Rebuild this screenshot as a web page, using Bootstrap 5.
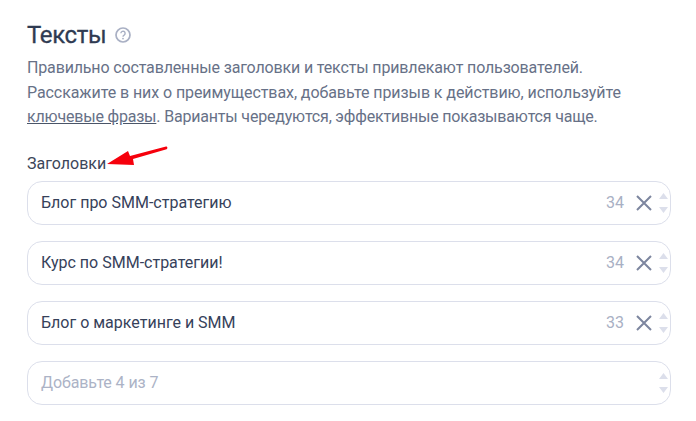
<!DOCTYPE html>
<html lang="ru">

<head>
  <meta charset="UTF-8" />
  <meta name="viewport" content="width=device-width, initial-scale=1" />
  <title>Тексты</title>
  <link href="https://cdn.jsdelivr.net/npm/bootstrap@5.3.0/dist/css/bootstrap.min.css" rel="stylesheet">
  <style>
    body {
      font-family: Roboto, "Liberation Sans", sans-serif;
      background-color: #fff;
      color: #2f3b52;
      overflow: hidden;
    }

    .page-wrap {
      position: relative;
      width: 696px;
      height: 421px;
      padding: 18px 25px 0 27px;
    }

    .page-title {
      font-size: 24px;
      line-height: 34px;
      font-weight: 400;
      -webkit-text-stroke: 0.3px #2f3b52;
      letter-spacing: -0.35px;
      color: #2f3b52;
      margin: 0;
    }

    .help-icon {
      width: 18px;
      height: 18px;
    }

    .intro-text {
      font-size: 16px;
      line-height: 24.5px;
      letter-spacing: -0.15px;
      color: #677187;
      margin: 4px 0 0;
      white-space: nowrap;
    }

    .intro-wide {
      letter-spacing: -0.08px;
    }

    .intro-tight {
      letter-spacing: -0.19px;
    }

    .intro-text a {
      color: #677187;
      text-decoration-color: #4a5568;
    }

    .field-label {
      font-size: 16px;
      line-height: 24px;
      color: #3c4659;
      margin: 22px 0 5px;
    }

    .text-field {
      height: 44px;
      border: 1px solid #dcdfeb;
      border-radius: 15px;
      padding: 0 2px 0 13px;
      font-size: 16px;
      color: #36415a;
    }

    .field-empty {
      color: #acb3c6;
      letter-spacing: -0.1px;
    }

    .field-count {
      color: #a9b0c4;
      margin-right: 12px;
    }

    .field-clear {
      width: 16px;
      height: 16px;
      margin-right: 7px;
    }

    .field-spin {
      width: 9px;
    }

    .arrow-mark {
      position: absolute;
      left: 99px;
      top: 140px;
      width: 75px;
      height: 30px;
    }
  </style>
</head>

<body>
  <div class="page-wrap">
    <div class="d-flex align-items-center gap-2">
      <h1 class="page-title">Тексты</h1>
      <svg class="help-icon" viewBox="0 0 18 18" fill="none">
        <circle cx="9" cy="9" r="7" stroke="#a9b0c4" stroke-width="1.7" />
        <path d="M6.900 7.300a2.100 2.100 0 1 1 3.200 1.800c-.7.400-1.100.8-1.100 1.600" stroke="#a9b0c4" stroke-width="1.400" />
        <circle cx="9" cy="12.600" r=".9" fill="#a9b0c4" />
      </svg>
    </div>
    <p class="intro-text">Правильно составленные заголовки и тексты привлекают пользователей.<br>
      <span class="intro-wide">Расскажите в них о преимуществах, добавьте призыв к действию, используйте</span><br>
      <span class="intro-tight"><a href="#">ключевые фразы</a>. Варианты чередуются, эффективные показываются чаще.</span></p>

    <div class="field-label">Заголовки</div>

    <div class="d-flex flex-column gap-3">
      <div class="text-field d-flex align-items-center">
        <span class="flex-grow-1">Блог про SMM-стратегию</span>
        <span class="field-count">34</span>
        <svg class="field-clear" viewBox="0 0 16 16"><path d="M1 1l14 14M15 1L1 15" stroke="#7d869f" stroke-width="2" /></svg>
        <svg class="field-spin" viewBox="0 0 9 24" height="24"><path d="M4.500 2L9 8H0zM4.500 22L9 16H0z" fill="#dcdfeb" /></svg>
      </div>
      <div class="text-field d-flex align-items-center">
        <span class="flex-grow-1">Курс по SMM-стратегии!</span>
        <span class="field-count">34</span>
        <svg class="field-clear" viewBox="0 0 16 16"><path d="M1 1l14 14M15 1L1 15" stroke="#7d869f" stroke-width="2" /></svg>
        <svg class="field-spin" viewBox="0 0 9 24" height="24"><path d="M4.500 2L9 8H0zM4.500 22L9 16H0z" fill="#dcdfeb" /></svg>
      </div>
      <div class="text-field d-flex align-items-center">
        <span class="flex-grow-1">Блог о маркетинге и SMM</span>
        <span class="field-count">33</span>
        <svg class="field-clear" viewBox="0 0 16 16"><path d="M1 1l14 14M15 1L1 15" stroke="#7d869f" stroke-width="2" /></svg>
        <svg class="field-spin" viewBox="0 0 9 24" height="24"><path d="M4.500 2L9 8H0zM4.500 22L9 16H0z" fill="#dcdfeb" /></svg>
      </div>
      <div class="text-field d-flex align-items-center">
        <span class="flex-grow-1 field-empty">Добавьте 4 из 7</span>
        <svg class="field-spin" viewBox="0 0 9 24" height="24"><path d="M4.500 2L9 8H0zM4.500 22L9 16H0z" fill="#dcdfeb" /></svg>
      </div>
    </div>

    <!-- red annotation arrow on top of the label -->
    <svg class="arrow-mark" viewBox="0 0 75 30">
      <path d="M8 24L29 11l2 5 36-9.500c1.500-.4 2 2 .6 2.700L34 19l1 6z" fill="#f6000c" />
    </svg>
  </div>
</body>

</html>
